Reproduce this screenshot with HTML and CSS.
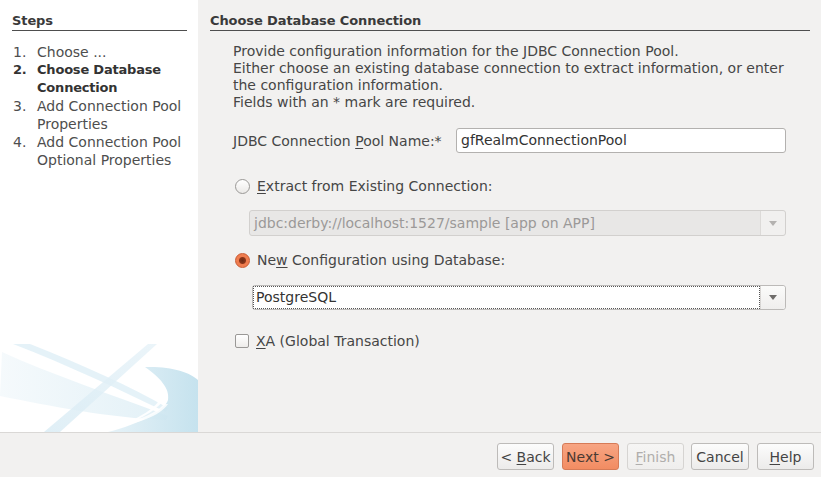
FILE: index.html
```html
<!DOCTYPE html>
<html>
<head>
<meta charset="utf-8">
<link rel="stylesheet" href="styles.css">
</head>
<body>
<div class="dialog">
  <div class="main">
    <aside class="steps">
      <div class="steps-head">Steps</div>
      <ol class="step-list">
        <li><span class="num">1.</span><span class="txt">Choose ...</span></li>
        <li class="current"><span class="num">2.</span><span class="txt">Choose Database<br>Connection</span></li>
        <li><span class="num">3.</span><span class="txt">Add Connection Pool<br>Properties</span></li>
        <li><span class="num">4.</span><span class="txt">Add Connection Pool<br>Optional Properties</span></li>
      </ol>
      <svg class="swoosh" width="198" height="88" viewBox="0 0 198 88">
        <defs>
          <linearGradient id="ga" x1="0" y1="0" x2="1" y2="0">
            <stop offset="0" stop-color="#f2f8fb"/>
            <stop offset="1" stop-color="#d9ecf4"/>
          </linearGradient>
          <linearGradient id="gb" x1="0" y1="0" x2="1" y2="0">
            <stop offset="0" stop-color="#e4f1f7"/>
            <stop offset="1" stop-color="#bfdfec"/>
          </linearGradient>
          <linearGradient id="gc" x1="0" y1="1" x2="1" y2="0">
            <stop offset="0" stop-color="#d8ebf4"/>
            <stop offset="1" stop-color="#e6f2f8"/>
          </linearGradient>
        </defs>
        <path d="M2 8 C50 30 110 50 168 72 L166 76 C110 74 50 62 0 52 Z" fill="url(#ga)" opacity="0.75"/>
        <path d="M13 0 L30 0 C80 20 130 42 168 64 L166 68 C120 46 70 22 13 0 Z" fill="#dceef6" opacity="0.75"/>
        <path d="M148 0 L157 0 L60 88 L44 88 Z" fill="url(#gc)" opacity="0.8"/>
        <path d="M145 23 C170 22 190 28 198 36 L198 88 L108 88 C140 80 165 66 168 56 C170 44 160 34 145 23 Z" fill="url(#gb)" opacity="0.9"/>
        <path d="M166 50 C164 60 150 72 118 84 L114 84 C146 72 160 60 162 50 Z" fill="#ffffff" opacity="0.9"/>
        <path d="M168 60 C160 72 140 80 92 88 L86 88 C132 80 156 70 164 60 Z" fill="#ffffff" opacity="0.8"/>
      </svg>
    </aside>
    <section class="content">
      <div class="content-head">Choose Database Connection</div>
      <div class="body">
        <p class="intro">Provide configuration information for the JDBC Connection Pool.<br>Either choose an existing database connection to extract information, or enter<br>the configuration information.<br>Fields with an * mark are required.</p>
        <div class="field-row">
          <label class="field-label">JDBC Connection <u>P</u>ool Name:*</label>
          <div class="textfield">gfRealmConnectionPool</div>
        </div>
        <div class="radio-row">
          <span class="radio"></span>
          <span class="opt-label"><u>E</u>xtract from Existing Connection:</span>
        </div>
        <div class="combo disabled">
          <div class="combo-text">jdbc:derby://localhost:1527/sample [app on APP]</div>
          <div class="combo-btn"><span class="tri"></span></div>
        </div>
        <div class="radio-row second">
          <span class="radio checked"></span>
          <span class="opt-label">Ne<u>w</u> Configuration using Database:</span>
        </div>
        <div class="combo active">
          <div class="combo-text focus">PostgreSQL</div>
          <div class="combo-btn"><span class="tri"></span></div>
        </div>
        <div class="check-row">
          <span class="checkbox"></span>
          <span class="opt-label"><u>X</u>A (Global Transaction)</span>
        </div>
      </div>
    </section>
  </div>
  <div class="footer">
    <button class="btn w57">&lt; <u>B</u>ack</button>
    <button class="btn primary w57">Next &gt;</button>
    <button class="btn w57" disabled><u>F</u>inish</button>
    <button class="btn w58">Cancel</button>
    <button class="btn w57"><u>H</u>elp</button>
  </div>
</div>
</body>
</html>
```
FILE: styles.css
```css
* { box-sizing: border-box; }
html, body {
  margin: 0;
  padding: 0;
  background: #f2f1f0;
}
body {
  font-family: "DejaVu Sans", "Open Sans", sans-serif;
  font-size: 14px;
  color: #464646;
}
u { text-decoration: underline; text-underline-offset: 2px; }

.dialog {
  width: 821px;
  height: 477px;
  display: flex;
  flex-direction: column;
}
.main {
  height: 433px;
  display: flex;
  border-bottom: 1px solid #dad8d6;
}
.steps {
  width: 198px;
  height: 432px;
  background: #ffffff;
  padding: 0 11px 0 12px;
  display: flex;
  flex-direction: column;
}
.steps-head, .content-head {
  padding-top: 12px;
  line-height: 17px;
  padding-bottom: 1px;
  font-size: 13px;
  font-weight: 700;
  letter-spacing: -0.1px;
  color: #3a3a3a;
  border-bottom: 1px solid #4e4e4e;
}
.step-list {
  list-style: none;
  margin: 12px 0 0 0;
  padding: 0;
  line-height: 18px;
  color: #4e4e4e;
}
.step-list li {
  display: flex;
  white-space: nowrap;
}
.step-list .num {
  width: 25px;
  padding-left: 1px;
}
.step-list .current {
  font-size: 13px;
  font-weight: 700;
  letter-spacing: -0.2px;
  color: #333333;
}
.swoosh {
  margin-top: auto;
  margin-left: -12px;
  display: block;
}

.content {
  flex: 1;
  padding: 0 11px 0 12px;
}
.body {
  padding: 0 24px 0 23px;
}
.intro {
  margin: 12px 0 0 0;
  line-height: 17px;
  white-space: nowrap;
}
.field-row {
  margin-top: 17px;
  display: flex;
  align-items: center;
}
.field-label { white-space: nowrap; }
.textfield {
  width: 330px;
  margin-left: auto;
  height: 25px;
  background: #ffffff;
  border: 1px solid #b3b1af;
  border-radius: 3px;
  padding: 0 4px;
  line-height: 23px;
  color: #333333;
}
.radio-row, .check-row {
  display: flex;
  align-items: center;
  gap: 7px;
  height: 20px;
  margin-top: 23px;
  padding-left: 2px;
}
.radio-row.second { margin-top: 14px; }
.check-row { margin-top: 21px; }
.radio {
  width: 15px;
  height: 15px;
  border-radius: 50%;
  border: 1px solid #9a9896;
  background: linear-gradient(#ffffff, #ebe9e7);
}
.radio.checked {
  border: 1px solid #c9582f;
  background: radial-gradient(circle, #6b2a16 0, #8a3519 3px, #ef7b4d 4px, #f08357 100%);
}
.checkbox {
  width: 14px;
  height: 14px;
  border-radius: 2px;
  border: 1px solid #9a9896;
  background: linear-gradient(#ffffff, #eeecea);
}
.combo {
  margin-top: 14px;
  display: flex;
  height: 26px;
  border: 1px solid #c6c4c2;
  border-radius: 3px;
  background: #ffffff;
}
.combo.disabled {
  margin-left: 16px;
  background: #e8e7e6;
  color: #9b9998;
  border-color: #d2d0ce;
}
.combo.active {
  margin-top: 15px;
  margin-left: 19px;
  height: 25px;
  border-color: #bcbab8;
}
.combo-text {
  flex: 1;
  padding: 0 4px;
  line-height: 24px;
  white-space: nowrap;
}
.combo-text.focus {
  border: 1px dotted #555555;
  line-height: 21px;
  padding: 0 2px;
  color: #333333;
}
.combo-btn {
  width: 25px;
  border-left: 1px solid #d8d6d4;
  display: flex;
  align-items: center;
  justify-content: center;
  background: linear-gradient(#fbfbfa, #efeeed);
  border-radius: 0 3px 3px 0;
}
.combo.disabled .combo-btn {
  background: #f1f0ef;
  border-left-color: #dcdad8;
}
.tri {
  width: 0;
  height: 0;
  border-left: 4px solid transparent;
  border-right: 4px solid transparent;
  border-top: 5px solid #6e6c6a;
}
.combo.disabled .tri { border-top-color: #b4b2b0; }

.footer {
  flex: 1;
  display: flex;
  justify-content: flex-end;
  align-items: flex-start;
  padding: 10px 7px 0 0;
  gap: 8px;
}
.btn {
  height: 27px;
  font-family: inherit;
  font-size: 14px;
  color: #444444;
  border: 1px solid #bdbbb9;
  border-radius: 3px;
  background: linear-gradient(#fcfcfc, #ecebea);
  padding: 0;
}
.btn.w57 { width: 57px; }
.btn.w58 { width: 58px; margin-left: -1px; }
.btn.primary {
  background: linear-gradient(#f7a583, #f28c62);
  border-color: #d67b57;
  color: #4a3a33;
}
.btn[disabled] {
  color: #b0aeac;
  border-color: #d6d4d2;
  background: linear-gradient(#f6f5f4, #efeeed);
}
```
